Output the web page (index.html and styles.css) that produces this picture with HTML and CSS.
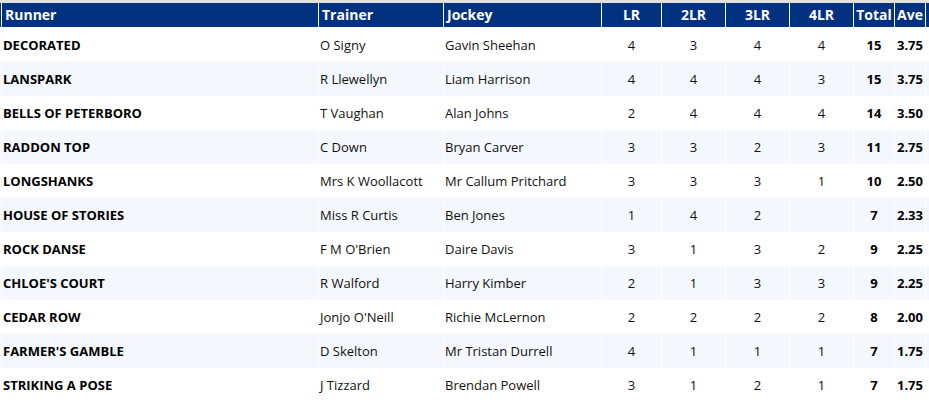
FILE: index.html
```html
<!DOCTYPE html>
<html>
<head>
<meta charset="utf-8">
<link rel="stylesheet" href="styles.css">
</head>
<body>
<div class="topbar"></div>
<table class="stats">
  <colgroup>
    <col class="c-edge"><col class="c-runner"><col class="c-trainer"><col class="c-jockey">
    <col class="c-lr"><col class="c-lr2"><col class="c-lr2"><col class="c-lr2">
    <col class="c-total"><col class="c-ave"><col class="c-extra">
  </colgroup>
  <thead>
    <tr>
      <th class="edge"></th>
      <th class="left">Runner</th>
      <th class="left">Trainer</th>
      <th class="left">Jockey</th>
      <th>LR</th><th>2LR</th><th>3LR</th><th>4LR</th>
      <th>Total</th><th>Ave</th><th class="edge"></th>
    </tr>
  </thead>
  <tbody>
    <tr><td class="edge"></td><td class="runner">DECORATED</td><td class="name">O Signy</td><td class="name">Gavin Sheehan</td><td>4</td><td>3</td><td>4</td><td>4</td><td class="b">15</td><td class="b">3.75</td><td class="edge"></td></tr>
    <tr><td class="edge"></td><td class="runner">LANSPARK</td><td class="name">R Llewellyn</td><td class="name">Liam Harrison</td><td>4</td><td>4</td><td>4</td><td>3</td><td class="b">15</td><td class="b">3.75</td><td class="edge"></td></tr>
    <tr><td class="edge"></td><td class="runner">BELLS OF PETERBORO</td><td class="name">T Vaughan</td><td class="name">Alan Johns</td><td>2</td><td>4</td><td>4</td><td>4</td><td class="b">14</td><td class="b">3.50</td><td class="edge"></td></tr>
    <tr><td class="edge"></td><td class="runner">RADDON TOP</td><td class="name">C Down</td><td class="name">Bryan Carver</td><td>3</td><td>3</td><td>2</td><td>3</td><td class="b">11</td><td class="b">2.75</td><td class="edge"></td></tr>
    <tr><td class="edge"></td><td class="runner">LONGSHANKS</td><td class="name">Mrs K Woollacott</td><td class="name">Mr Callum Pritchard</td><td>3</td><td>3</td><td>3</td><td>1</td><td class="b">10</td><td class="b">2.50</td><td class="edge"></td></tr>
    <tr><td class="edge"></td><td class="runner">HOUSE OF STORIES</td><td class="name">Miss R Curtis</td><td class="name">Ben Jones</td><td>1</td><td>4</td><td>2</td><td></td><td class="b">7</td><td class="b">2.33</td><td class="edge"></td></tr>
    <tr><td class="edge"></td><td class="runner">ROCK DANSE</td><td class="name">F M O'Brien</td><td class="name">Daire Davis</td><td>3</td><td>1</td><td>3</td><td>2</td><td class="b">9</td><td class="b">2.25</td><td class="edge"></td></tr>
    <tr><td class="edge"></td><td class="runner">CHLOE'S COURT</td><td class="name">R Walford</td><td class="name">Harry Kimber</td><td>2</td><td>1</td><td>3</td><td>3</td><td class="b">9</td><td class="b">2.25</td><td class="edge"></td></tr>
    <tr><td class="edge"></td><td class="runner">CEDAR ROW</td><td class="name">Jonjo O'Neill</td><td class="name">Richie McLernon</td><td>2</td><td>2</td><td>2</td><td>2</td><td class="b">8</td><td class="b">2.00</td><td class="edge"></td></tr>
    <tr><td class="edge"></td><td class="runner">FARMER'S GAMBLE</td><td class="name">D Skelton</td><td class="name">Mr Tristan Durrell</td><td>4</td><td>1</td><td>1</td><td>1</td><td class="b">7</td><td class="b">1.75</td><td class="edge"></td></tr>
    <tr><td class="edge"></td><td class="runner">STRIKING A POSE</td><td class="name">J Tizzard</td><td class="name">Brendan Powell</td><td>3</td><td>1</td><td>2</td><td>1</td><td class="b">7</td><td class="b">1.75</td><td class="edge"></td></tr>
  </tbody>
</table>
</body>
</html>
```

FILE: styles.css
```css
html, body {
  margin: 0;
  padding: 0;
  background: #ffffff;
  overflow: hidden;
}
body {
  font-family: "Open Sans", "Liberation Sans", sans-serif;
  font-size: 13px;
  color: #111111;
}
.topbar {
  height: 3px;
  background: #e1e1e1;
}
.stats {
  border-collapse: separate;
  border-spacing: 1px 0;
  table-layout: fixed;
  margin-left: -1px;
  width: 958px;
}
.c-edge { width: 1px; }
.c-runner { width: 316px; }
.c-trainer { width: 124px; }
.c-jockey { width: 157px; }
.c-lr { width: 59px; }
.c-lr2 { width: 63px; }
.c-total { width: 40px; }
.c-ave { width: 30px; }
.c-extra { width: 30px; }

.stats th {
  background: #02327f;
  color: #ffffff;
  font-size: 14px;
  font-weight: 700;
  height: 24px;
  padding: 0;
  text-align: center;
  white-space: nowrap;
  border-bottom: 1px solid #ffffff;
  line-height: 24px;
  overflow: visible;
}
.stats th.left {
  text-align: left;
  padding-left: 3px;
}
.stats th.edge, .stats td.edge {
  padding: 0;
}
.stats td {
  height: 34px;
  padding: 0;
  text-align: center;
  vertical-align: middle;
  white-space: nowrap;
}
.stats tbody tr:nth-child(even) td {
  background: #f4f7fc;
}
.stats td.runner {
  text-align: left;
  padding-left: 1px;
  font-weight: 700;
  color: #000000;
}
.stats td.name {
  text-align: left;
  padding-left: 1px;
}
.stats td.b {
  font-weight: 700;
  color: #000000;
}
```
